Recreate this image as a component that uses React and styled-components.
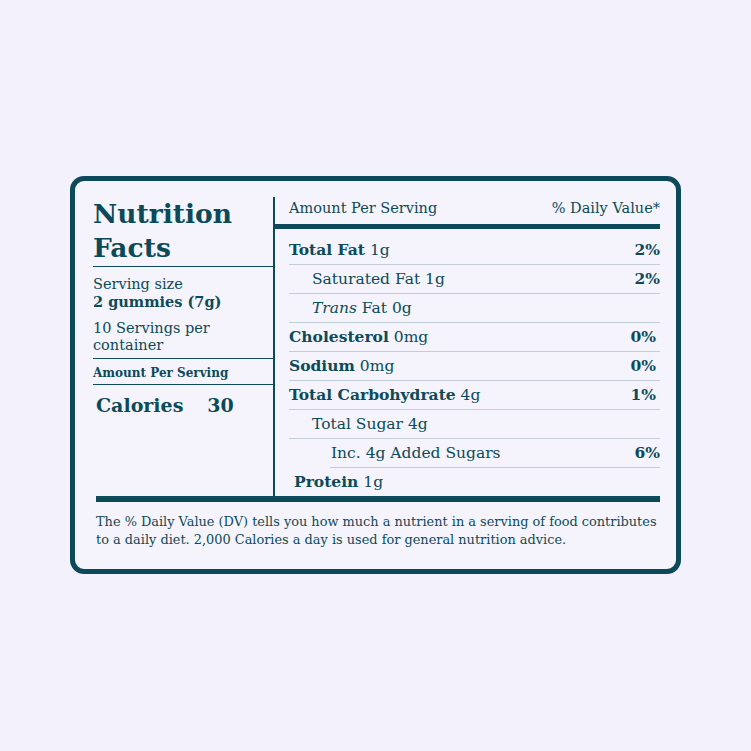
import styled, { createGlobalStyle } from "styled-components";

const INK = "#0c4a59";
const RULE = "#c3cdda";

const Global = createGlobalStyle`
  html, body { margin: 0; padding: 0; background: #f3f1fb; }
  body { font-family: "DejaVu Serif", "Liberation Serif", serif; color: ${INK}; }
`;

const Page = styled.div`
  width: 751px;
  height: 751px;
  display: flex;
  align-items: center;
  justify-content: center;
`;

const Card = styled.div`
  width: 611px;
  box-sizing: border-box;
  margin-top: -2px;
  border: 5px solid ${INK};
  border-radius: 14px;
  background: #f5f4fc;
  padding: 16px 16px 20px 18px;
`;

const Top = styled.div`
  display: grid;
  grid-template-columns: 180px 1fr;
  height: 299px;
`;

const Left = styled.div`
  display: flex;
  flex-direction: column;
`;

const Title = styled.h1`
  margin: 0;
  font-size: 26.5px;
  line-height: 34px;
  font-weight: 700;
  padding-bottom: 1px;
  border-bottom: 1.5px solid ${INK};
`;

const Block = styled.div`
  font-size: 14.5px;
  line-height: 17px;
  padding: ${(p) => p.$pad || "10px 0 6px"};
  border-bottom: ${(p) => (p.$line ? `1.5px solid ${INK}` : "none")};
  b { font-weight: 700; }
`;

const Small = styled.div`
  font-size: 12px;
  font-weight: 700;
  line-height: 17px;
  padding: 6px 0 2px;
  border-bottom: 1.5px solid ${INK};
`;

const Calories = styled.div`
  display: flex;
  gap: 24px;
  font-size: 19px;
  font-weight: 700;
  padding: 9px 0 0 3px;
`;

const Right = styled.div`
  border-left: 2px solid ${INK};
  display: flex;
  flex-direction: column;
`;

const Header = styled.div`
  display: flex;
  justify-content: space-between;
  font-size: 14.5px;
  height: 27px;
  box-sizing: border-box;
  align-items: center;
  padding: 0 0 4px 14px;
  border-bottom: 5px solid ${INK};
  height: 32px;
`;

const Rows = styled.div`
  padding-left: 14px;
  padding-top: 7px;
  display: flex;
  flex-direction: column;
`;

const Row = styled.div`
  display: flex;
  justify-content: space-between;
  align-items: center;
  height: 28px;
  font-size: 15.5px;
  margin-left: ${(p) => p.$indent || 0}px;
  padding-left: ${(p) => p.$pad || 0}px;
  border-bottom: ${(p) => (p.$last ? "none" : `1px solid ${RULE}`)};
  b { font-weight: 700; }
  i { font-style: italic; }
`;

const Pct = styled.span`
  font-weight: 700;
  padding-right: ${(p) => p.$shift || 0}px;
`;

const ThickRule = styled.div`
  height: 6px;
  background: ${INK};
  margin-left: 3px;
`;

const Foot = styled.p`
  margin: 11px 0 0 3px;
  max-width: 566px;
  font-size: 12.9px;
  line-height: 18px;
`;

const rows = [
  { label: <><b>Total Fat</b> 1g</>, pct: "2%" },
  { label: <>Saturated Fat 1g</>, pct: "2%", pad: 23 },
  { label: <><i>Trans</i> Fat 0g</>, pad: 23 },
  { label: <><b>Cholesterol</b> 0mg</>, pct: "0%", shift: 4 },
  { label: <><b>Sodium</b> 0mg</>, pct: "0%", shift: 4 },
  { label: <><b>Total Carbohydrate</b> 4g</>, pct: "1%", shift: 4 },
  { label: <>Total Sugar 4g</>, pad: 23 },
  { label: <>Inc. 4g Added Sugars</>, pct: "6%", indent: 41, pad: 1 },
  { label: <><b>Protein</b> 1g</>, pad: 5, last: true },
];

export default function App() {
  return (
    <Page>
      <Global />
      <Card>
        <Top>
          <Left>
            <Title>Nutrition<br />Facts</Title>
            <Block $pad="9px 0 0">
              Serving size<br /><b>2 gummies (7g)</b>
            </Block>
            <Block $pad="9px 0 4px" $line>
              10 Servings per<br />container
            </Block>
            <Small>Amount Per Serving</Small>
            <Calories>
              <span>Calories</span>
              <span>30</span>
            </Calories>
          </Left>
          <Right>
            <Header>
              <span>Amount Per Serving</span>
              <span>% Daily Value*</span>
            </Header>
            <Rows>
              {rows.map((r, i) => (
                <Row key={i} $indent={r.indent} $pad={r.pad} $last={r.last}>
                  <span>{r.label}</span>
                  {r.pct && <Pct $shift={r.shift}>{r.pct}</Pct>}
                </Row>
              ))}
            </Rows>
          </Right>
        </Top>
        <ThickRule />
        <Foot>
          The % Daily Value (DV) tells you how much a nutrient in a serving of food contributes
          to a daily diet. 2,000 Calories a day is used for general nutrition advice.
        </Foot>
      </Card>
    </Page>
  );
}
